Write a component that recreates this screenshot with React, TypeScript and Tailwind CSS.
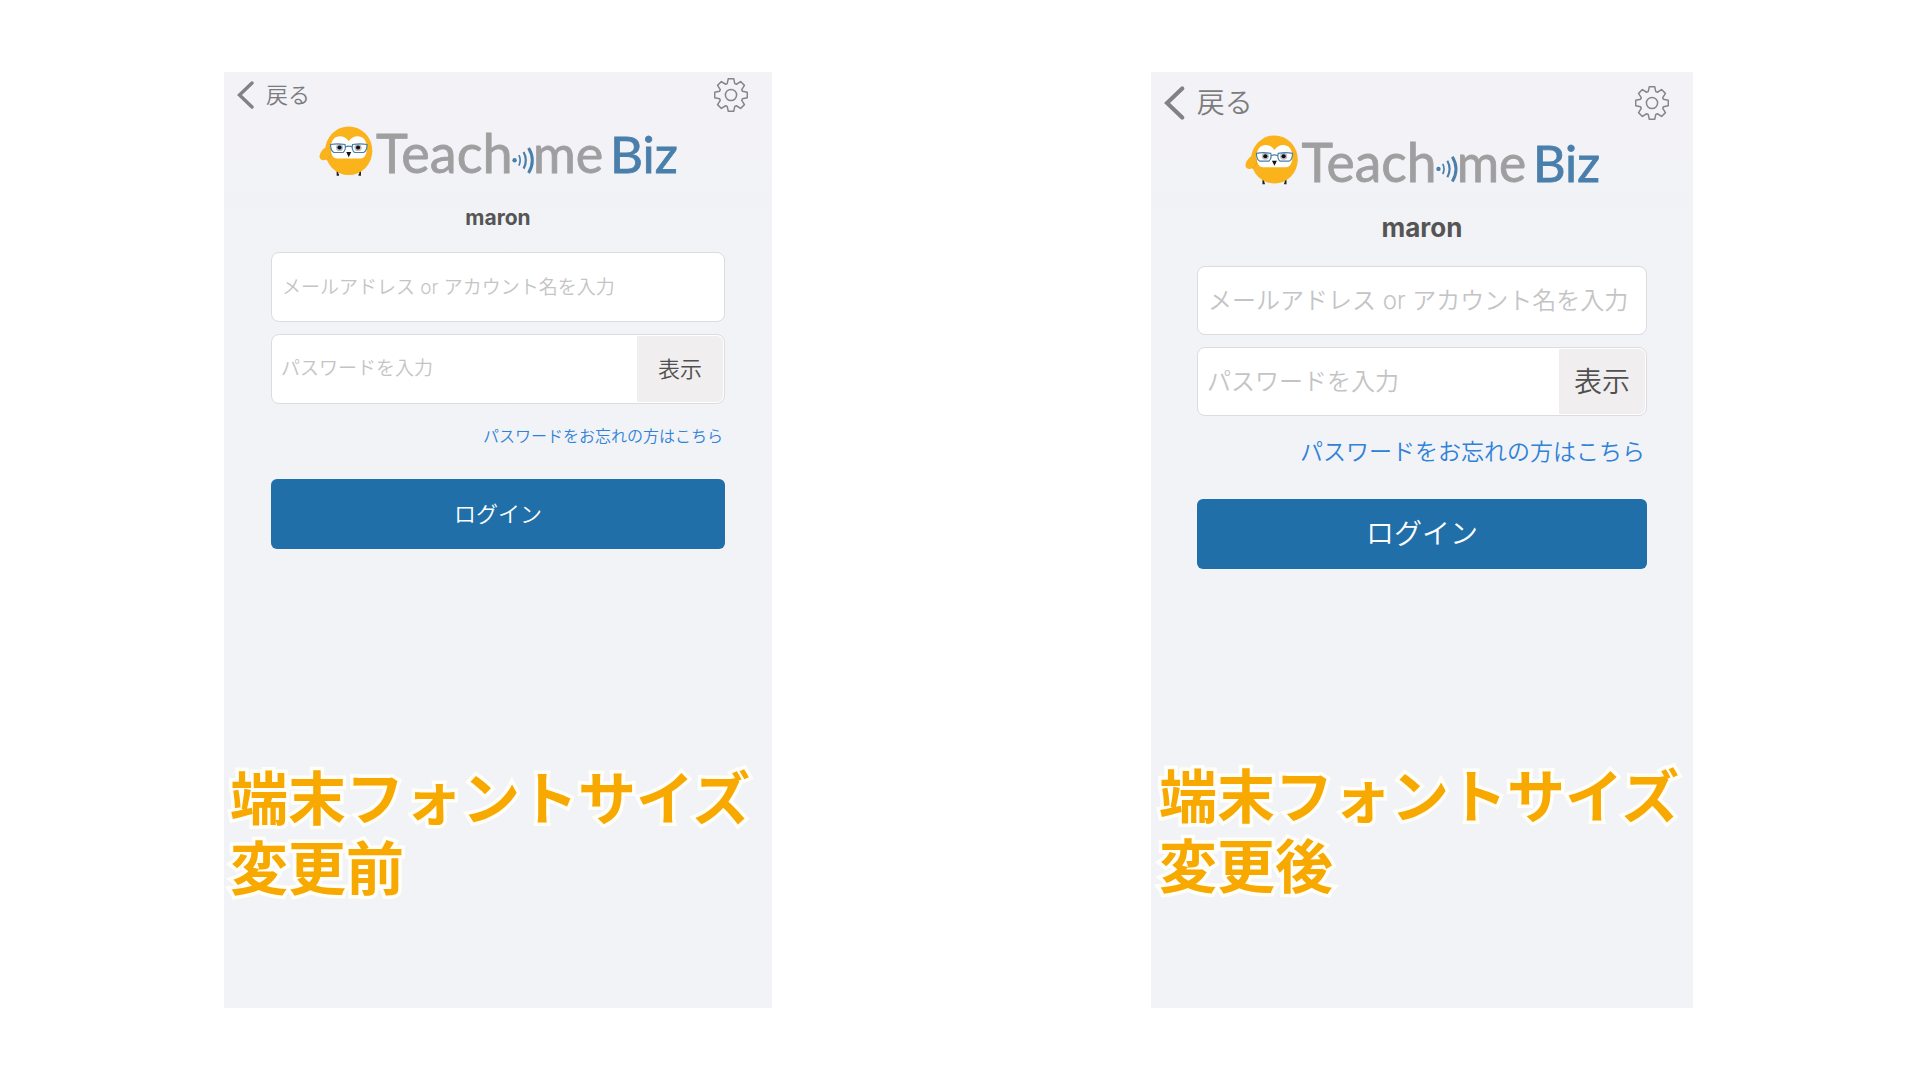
import clsx from 'clsx';

interface LoginPreviewProps {
  caption: string[];
  large?: boolean;
}

// One tooth pointing up, repeated every 45 degrees around the hub.
const TOOTH = [
  [-3.8, -11.4],
  [-2.7, -16.3],
  [2.7, -16.3],
  [3.8, -11.4],
];

const GEAR_POINTS = Array.from({ length: 8 }, (_, i) => {
  const angle = (i * Math.PI) / 4;
  return TOOTH.map(([x, y]) => {
    const px = x * Math.cos(angle) - y * Math.sin(angle);
    const py = x * Math.sin(angle) + y * Math.cos(angle);
    return `${px.toFixed(2)},${py.toFixed(2)}`;
  }).join(' ');
}).join(' ');

function GearIcon() {
  return (
    <svg viewBox="-17 -17 34 34" className="size-[34px]" fill="none" stroke="#868688" strokeWidth="1.5" strokeLinejoin="round">
      <polygon points={GEAR_POINTS} />
      <circle r="5.6" />
    </svg>
  );
}

function BackIcon({ className }: { className: string }) {
  return (
    <svg viewBox="0 0 17 28" className={className} fill="none" stroke="#828284" strokeWidth="3.4" strokeLinecap="round">
      <path d="M15 2 2.5 14 15 26" />
    </svg>
  );
}

function Logo() {
  return (
    <svg viewBox="1 0 356 50" className="mx-auto block w-[65%] overflow-visible" role="img" aria-label="Teachme Biz">
      <path d="M18.5 45v3.8h1.500M41 45v3.8h-1.500" stroke="#222" strokeWidth="1.8" fill="none" />
      <ellipse cx="29.7" cy="24.7" rx="23.6" ry="24.3" fill="#fbb31c" />
      <path d="M9 20C4 22 .5 27 .5 30.5c0 3.5 3.5 4.5 6.5 3.3C11 32 12 27 12 23z" fill="#fbb31c" />
      <path d="M11.5 24c1 5-1 8-4 9.8" stroke="#dd9c20" strokeWidth=".6" fill="none" />
      <path
        d="M29.7 15.2C26 9.5 18.5 8.5 14.5 13c-2 2.5-3 6-2.8 10 .2 5.5 2.3 9.5 6.3 9.5h23.5c4 0 6-4 6.3-9.5.2-4-.8-7.5-2.800-10-4-4.500-11.500-3.500-15.300 2.200z"
        fill="#fff"
      />
      <circle cx="20.5" cy="21.5" r="3.6" fill="#b9bec4" />
      <circle cx="39" cy="21.5" r="3.6" fill="#b9bec4" />
      <circle cx="20.5" cy="21.5" r="2.1" fill="#111" />
      <circle cx="39" cy="21.5" r="2.1" fill="#111" />
      <g stroke="#4a80aa" strokeWidth="1.2" fill="none">
        <path d="M11.5 18.5c4-.8 10-.8 14.5 0 .8 3.500 0 6.500-2 8h-9c-2.500-1-3.500-4.500-3.500-8z" />
        <path d="M48 18.5c-4-.8-10-.8-14.5 0-.8 3.500 0 6.500 2 8h9c2.500-1 3.500-4.500 3.500-8z" />
        <path d="M26.2 21c2-1 5-1 7.1 0" />
      </g>
      <path d="M27.2 26h5l-2.5 5.200z" fill="#111" />
      <g className="font-['Lato',sans-serif] font-normal" fontSize="52" strokeWidth=".8">
        <text x="57" y="47" fontSize="54" fill="#9f9fa0" stroke="#9f9fa0">
          Teach
        </text>
        <text x="214" y="47" fill="#9f9fa0" stroke="#9f9fa0">
          me
        </text>
        <text x="291" y="47" fontSize="51" fill="#4a7fab" stroke="#4a7fab">
          Biz
        </text>
      </g>
      <circle cx="195.5" cy="34.3" r="2.2" fill="#4a7fab" />
      <g stroke="#4a7fab" fill="none">
        <path d="M199.8 29.2q2.6 5 0 10.3" strokeWidth="1.7" />
        <path d="M204.5 26q4.5 8.3 0 16.6" strokeWidth="2.2" />
        <path d="M209.5 22q7.5 12.4 0 25" strokeWidth="3" />
      </g>
    </svg>
  );
}

function LoginPreview({ caption, large = false }: LoginPreviewProps) {
  const placeholder = large ? 'text-[24px]' : 'text-[19px]';
  const label = large ? 'text-[28px]' : 'text-[22px]';
  const field = large ? 'h-[69px]' : 'h-[70px]';

  return (
    <section className="min-w-0 bg-linear-to-b from-[#f3f2f7] to-[#f1f3f7] to-20% font-[350]">
      <header className={clsx('flex items-center justify-between pr-6 pl-[13px] text-[#7c7c7e]', large ? 'h-[62px]' : 'h-[46px]')}>
        <button type="button" className={clsx('flex items-center gap-3', label)}>
          <BackIcon className={large ? 'h-[34px]' : 'h-7'} />
          戻る
        </button>
        <button type="button" aria-label="設定">
          <GearIcon />
        </button>
      </header>

      <div className={large ? 'pt-px' : 'pt-2'}>
        <Logo />
      </div>

      <h2 className={clsx('text-center leading-8 font-bold text-[#555]', large ? 'mt-7 mb-[22px] text-[26px]' : 'mt-[26px] mb-[18px] text-[21px]')}>
        maron
      </h2>

      <form className={clsx('flex flex-col', large ? 'mx-[46px]' : 'mx-[47px]')} onSubmit={(e) => e.preventDefault()}>
        <input
          type="text"
          aria-label="メールアドレス or アカウント名"
          placeholder="メールアドレス or アカウント名を入力"
          className={clsx('w-full rounded-lg border border-[#dcdbdf] bg-white px-2.5 placeholder:text-[#c4c4c6]', placeholder, field)}
        />

        <div className={clsx('mt-3 flex rounded-lg border border-[#dcdbdf] bg-white p-px', field)}>
          <input
            type="password"
            aria-label="パスワード"
            placeholder="パスワードを入力"
            className={clsx('min-w-0 flex-1 pl-2 placeholder:text-[#c4c4c6]', placeholder)}
          />
          <button type="button" className={clsx('w-[86px] rounded-r-md bg-[#f1eeef] text-[#505050]', label)}>
            表示
          </button>
        </div>

        <a href="#" className={clsx('mt-5 self-end pr-0.5 text-[#2f82d8]', large ? 'text-[23px] leading-8' : 'text-[16px] leading-6')}>
          パスワードをお忘れの方はこちら
        </a>

        <button type="submit" className={clsx('mt-[31px] h-[70px] rounded-md bg-[#206fa9] text-white', label)}>
          ログイン
        </button>
      </form>

      <p
        className={clsx(
          'text-[58px] leading-[70px] font-bold whitespace-nowrap text-[#f7a900] [-webkit-text-stroke:7px_#fffef8] [paint-order:stroke_fill]',
          large ? 'mt-[193px] pl-2' : 'mt-[215px] pl-1.5',
        )}
      >
        {caption.map((line) => (
          <span key={line} className="block">
            {line}
          </span>
        ))}
      </p>
    </section>
  );
}

export default function App() {
  return (
    <main className="grid min-h-screen grid-cols-[548fr_542fr] gap-x-[379px] bg-white py-[72px] pr-[227px] pl-56 font-['Inter','Noto_Sans_CJK_JP',sans-serif]">
      <LoginPreview caption={['端末フォントサイズ', '変更前']} />
      <LoginPreview caption={['端末フォントサイズ', '変更後']} large />
    </main>
  );
}
